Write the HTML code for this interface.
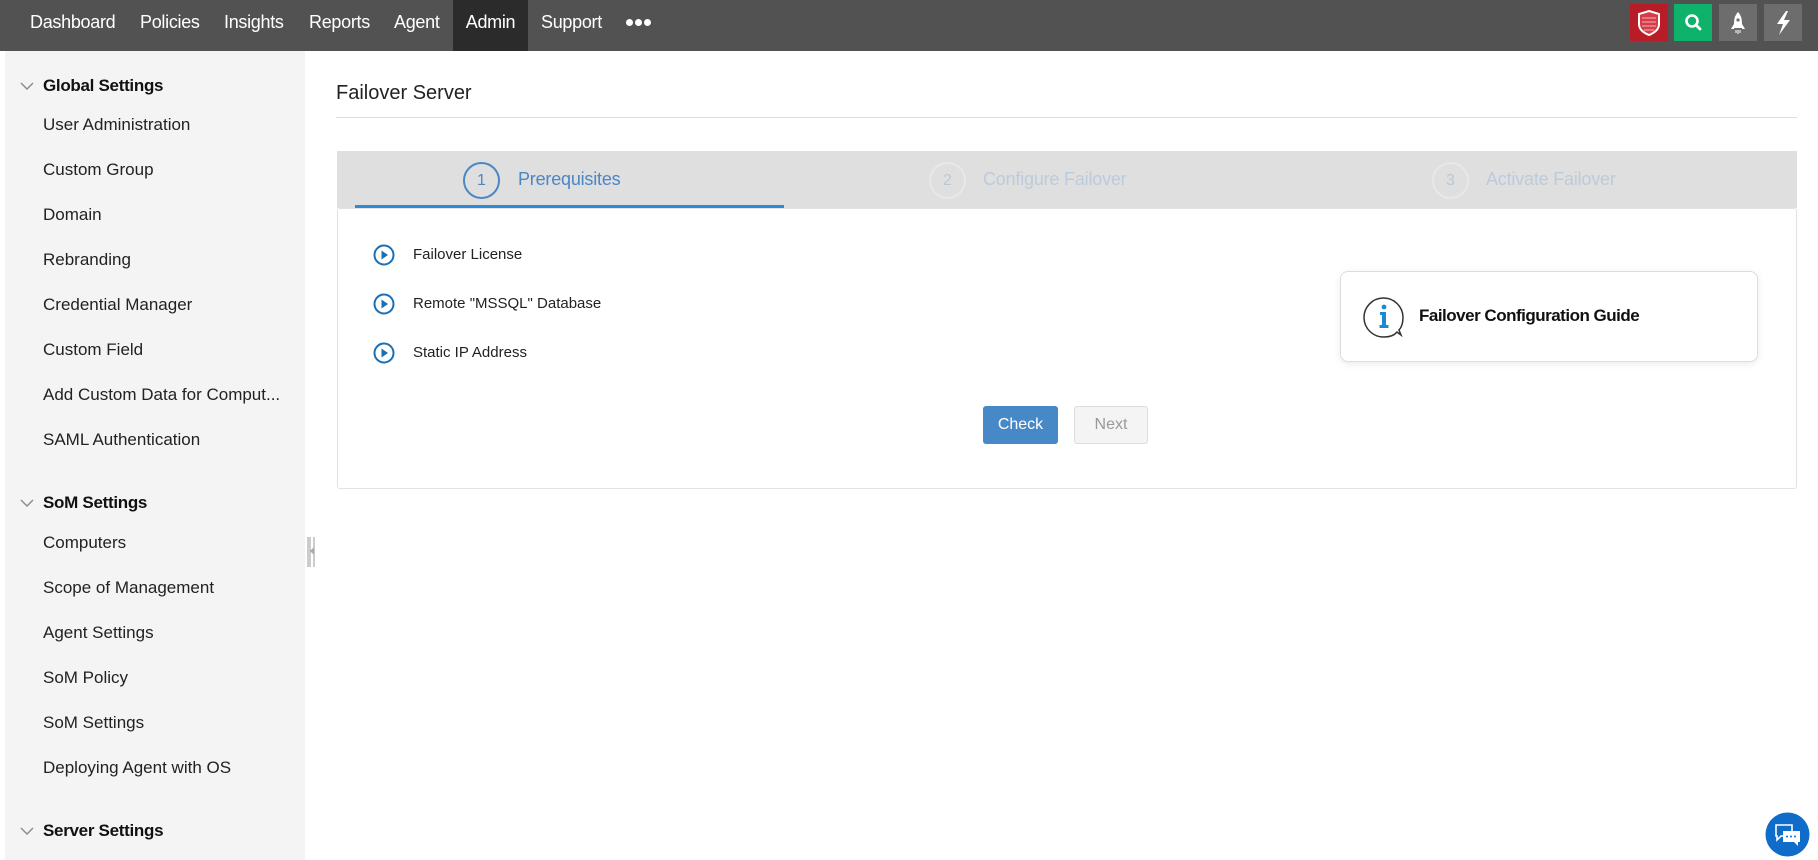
<!DOCTYPE html>
<html><head><meta charset="utf-8"><style>
*{margin:0;padding:0;box-sizing:border-box}
body{width:1818px;height:860px;overflow:hidden;background:#fff;font-family:"Liberation Sans",sans-serif;position:relative;color:#222}
.top{position:absolute;left:0;top:0;width:1818px;height:51px;background:#525252}
.nav{position:absolute;top:0;height:51px;line-height:44px;color:#fff;font-size:18px;letter-spacing:-0.3px}
.adm{background:#2b2b2b}
.dot{position:absolute;top:19px;width:7px;height:7px;border-radius:50%;background:#fff}
.ib{position:absolute;top:4px;width:38px;height:37px}
.side{position:absolute;left:5px;top:51px;width:300px;height:809px;background:#f4f4f4}
.si{position:absolute;left:43px;font-size:17px;color:#222;transform:translateY(-50%);white-space:nowrap}
.sh{position:absolute;left:43px;font-size:17px;font-weight:bold;color:#111;transform:translateY(-50%);letter-spacing:-0.3px}
.chev{position:absolute;left:20px;width:14px;height:8px}
.abs{position:absolute}
</style></head><body>
<div class="top"></div>
<div class="nav" style="left:30px">Dashboard</div>
<div class="nav" style="left:140px">Policies</div>
<div class="nav" style="left:224px">Insights</div>
<div class="nav" style="left:309px">Reports</div>
<div class="nav" style="left:394px">Agent</div>
<div class="nav adm" style="left:453px;width:75px;text-align:center">Admin</div>
<div class="nav" style="left:541px">Support</div>
<div class="dot" style="left:626px"></div><div class="dot" style="left:635px"></div><div class="dot" style="left:644px"></div>
<div class="ib" style="left:1630px;background:#b81c27"><svg width="38" height="37" viewBox="0 0 38 37"><path d="M19 7 L29 10 V20 Q29 27 19 31 Q9 27 9 20 V10 Z" fill="#d43d47" stroke="#fff" stroke-width="2"/><path d="M12 14H26M12 18H26M12 22H26M14 26H24" stroke="#e98a90" stroke-width="1.5"/></svg></div>
<div class="ib" style="left:1674px;background:#0fb26b"><svg width="38" height="37" viewBox="0 0 38 37"><circle cx="18" cy="17" r="5.5" fill="none" stroke="#fff" stroke-width="2.6"/><path d="M22 21l4 4" stroke="#fff" stroke-width="2.8" stroke-linecap="round"/></svg></div>
<div class="ib" style="left:1719px;background:#6d6d6d"><svg width="38" height="37" viewBox="0 0 38 37"><path d="M19 8 Q23 12 23 19 V24 H15 V19 Q15 12 19 8Z" fill="#fff"/><path d="M15 20 L12 25 H15Z M23 20 L26 25 H23Z" fill="#fff"/><circle cx="19" cy="16" r="1.6" fill="#6d6d6d"/><path d="M17 26v3M19 26v4M21 26v3" stroke="#fff" stroke-width="1"/></svg></div>
<div class="ib" style="left:1764px;background:#6d6d6d"><svg width="38" height="37" viewBox="0 0 38 37"><path d="M22 7 L13 20 H19 L15 31 L26 16 H20 L24 7Z" fill="#fff"/></svg></div>

<div class="side"></div>
<svg class="chev" style="top:82px" viewBox="0 0 14 8"><path d="M1 1l6 6 6-6" fill="none" stroke="#888" stroke-width="1.4"/></svg>
<div class="sh" style="top:86px">Global Settings</div>
<div class="si" style="top:125px">User Administration</div>
<div class="si" style="top:170px">Custom Group</div>
<div class="si" style="top:215px">Domain</div>
<div class="si" style="top:260px">Rebranding</div>
<div class="si" style="top:305px">Credential Manager</div>
<div class="si" style="top:350px">Custom Field</div>
<div class="si" style="top:395px">Add Custom Data for Comput...</div>
<div class="si" style="top:440px">SAML Authentication</div>
<svg class="chev" style="top:499px" viewBox="0 0 14 8"><path d="M1 1l6 6 6-6" fill="none" stroke="#888" stroke-width="1.4"/></svg>
<div class="sh" style="top:503px">SoM Settings</div>
<div class="si" style="top:543px">Computers</div>
<div class="si" style="top:588px">Scope of Management</div>
<div class="si" style="top:633px">Agent Settings</div>
<div class="si" style="top:678px">SoM Policy</div>
<div class="si" style="top:723px">SoM Settings</div>
<div class="si" style="top:768px">Deploying Agent with OS</div>
<svg class="chev" style="top:827px" viewBox="0 0 14 8"><path d="M1 1l6 6 6-6" fill="none" stroke="#888" stroke-width="1.4"/></svg>
<div class="sh" style="top:831px">Server Settings</div>
<svg class="abs" style="left:307px;top:537px" width="9" height="30"><path d="M1 0v30M3 0v30M7 0v30" stroke="#999" stroke-width="1"/><path d="M7 10l-4 4 4 4" fill="#aaa"/></svg>

<div class="abs" style="left:336px;top:82px;font-size:20px;color:#222">Failover Server</div>
<div class="abs" style="left:336px;top:117px;width:1461px;height:1px;background:#ddd"></div>

<div class="abs" style="left:337px;top:151px;width:1460px;height:57px;background:#dfdfdf"></div>
<div class="abs" style="left:337px;top:208px;width:1460px;height:281px;border:1px solid #e2e2e2;border-radius:3px;background:#fff"></div>
<div class="abs" style="left:355px;top:205px;width:429px;height:3px;background:#2f8ad8"></div>
<div class="abs" style="left:463px;top:162px;width:37px;height:37px;border:2px solid #4b86c5;border-radius:50%;text-align:center;line-height:33px;color:#4b86c5;font-size:16px">1</div>
<div class="abs" style="left:518px;top:169px;font-size:18px;color:#4b86c5;letter-spacing:-0.2px">Prerequisites</div>
<div class="abs" style="left:929px;top:162px;width:37px;height:37px;border:2px solid #e8e8e8;border-radius:50%;text-align:center;line-height:33px;color:#bcc7d2;font-size:16px">2</div>
<div class="abs" style="left:983px;top:169px;font-size:18px;color:#bccbdb;letter-spacing:-0.2px">Configure Failover</div>
<div class="abs" style="left:1432px;top:162px;width:37px;height:37px;border:2px solid #e8e8e8;border-radius:50%;text-align:center;line-height:33px;color:#bcc7d2;font-size:16px">3</div>
<div class="abs" style="left:1486px;top:169px;font-size:18px;color:#bccbdb;letter-spacing:-0.2px">Activate Failover</div>

<svg class="abs" style="left:373px;top:244px" width="22" height="22"><circle cx="11" cy="11" r="9.5" fill="none" stroke="#1a6fb5" stroke-width="2"/><path d="M8.5 6.5v9l6.5-4.5z" fill="#1a6fb5"/></svg>
<div class="abs" style="left:413px;top:246px;font-size:15px">Failover License</div>
<svg class="abs" style="left:373px;top:293px" width="22" height="22"><circle cx="11" cy="11" r="9.5" fill="none" stroke="#1a6fb5" stroke-width="2"/><path d="M8.5 6.5v9l6.5-4.5z" fill="#1a6fb5"/></svg>
<div class="abs" style="left:413px;top:295px;font-size:15px">Remote "MSSQL" Database</div>
<svg class="abs" style="left:373px;top:342px" width="22" height="22"><circle cx="11" cy="11" r="9.5" fill="none" stroke="#1a6fb5" stroke-width="2"/><path d="M8.5 6.5v9l6.5-4.5z" fill="#1a6fb5"/></svg>
<div class="abs" style="left:413px;top:344px;font-size:15px">Static IP Address</div>

<div class="abs" style="left:1340px;top:271px;width:418px;height:91px;border:1px solid #ddd;border-radius:8px;background:#fff;box-shadow:0 2px 8px rgba(0,0,0,.08)"></div>
<svg class="abs" style="left:1363px;top:296px" width="44" height="44" viewBox="0 0 44 44"><path d="M34 36 Q30 41 21 41 A19.5 19.5 0 1 1 40 21 Q40 30 36 34 L38 39 Z" fill="#fff" stroke="#333" stroke-width="1.5"/><circle cx="21" cy="11" r="2.4" fill="#1a8ad4"/><path d="M17 16h6v13h2.5v3h-9v-3H19V19h-2z" fill="#1a8ad4"/></svg>
<div class="abs" style="left:1419px;top:306px;font-size:17px;font-weight:bold;color:#111;letter-spacing:-0.5px">Failover Configuration Guide</div>

<div class="abs" style="left:983px;top:406px;width:75px;height:38px;background:#4788c7;border-radius:3px;color:#fff;font-size:16px;text-align:center;line-height:38px">Check</div>
<div class="abs" style="left:1074px;top:406px;width:74px;height:38px;background:#f4f4f4;border:1px solid #ddd;border-radius:3px;color:#999;font-size:16px;text-align:center;line-height:36px">Next</div>

<svg class="abs" style="left:1765px;top:812px" width="45" height="45" viewBox="0 0 45 45"><circle cx="22.5" cy="22.5" r="22" fill="#0f6cc9"/><path d="M11 13h16v11h-11l-4 4v-4h-1z" fill="#0f6cc9" stroke="#fff" stroke-width="1.6"/><path d="M18 19h17v11h-2v4l-4-4h-11z" fill="#fff"/><circle cx="22" cy="24.5" r="1" fill="#0f6cc9"/><circle cx="26" cy="24.5" r="1" fill="#0f6cc9"/><circle cx="30" cy="24.5" r="1" fill="#0f6cc9"/></svg>
</body></html>
